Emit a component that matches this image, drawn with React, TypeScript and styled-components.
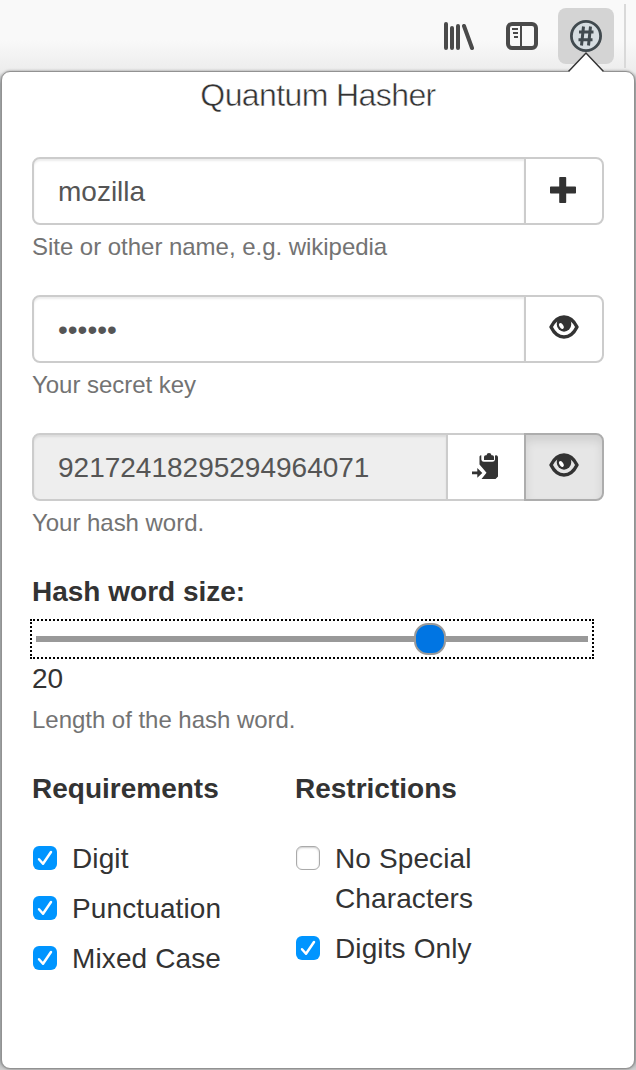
import React, { useState } from 'react';
import styled, { createGlobalStyle } from 'styled-components';

const Global = createGlobalStyle`
  * { box-sizing: border-box; }
  body { margin: 0; background: #b9bcbe; font-family: "Liberation Sans", Arial, sans-serif; font-size: 28px; line-height: 40px; color: #333; }
`;

const Window = styled.div`
  width: 636px;
  height: 1070px;
  display: flex;
  flex-direction: column;
  overflow: hidden;
  background: linear-gradient(#f9f9f9 0, #f9f9f9 40px, #ececec 72px, #b4b8ba 84px, #b4b8ba 1060px, #d0d0d0);
`;
const Toolbar = styled.div`
  height: 71px;
  flex: none;
  display: flex;
  justify-content: flex-end;
  padding-top: 8px;
`;
const ToolButton = styled.div<{ $active?: boolean }>`
  position: relative;
  width: 56px;
  height: 56px;
  margin-left: 8px;
  display: flex;
  align-items: center;
  justify-content: center;
  border-radius: 8px;
  background: ${(p) => (p.$active ? '#d4d4d4' : 'transparent')};
`;
const Separator = styled.div`
  width: 2px;
  height: 64px;
  margin: -4px 10px 0;
  background: #d9d9d9;
`;
const Notch = styled.svg`
  position: absolute;
  left: 9px;
  top: 43px;
  z-index: 1;
`;
const Panel = styled.main`
  width: 634px;
  height: 998px;
  margin-left: 1px;
  flex: none;
  padding: 3px 30px 0;
  background: #fff;
  border: 1px solid #929292;
  border-radius: 9px;
  box-shadow: 0 0 3px rgba(0, 0, 0, 0.4);
`;
const Title = styled.h1`
  margin: 0 0 42px;
  font-size: 32px;
  font-weight: 300;
  line-height: 40px;
  letter-spacing: -0.6px;
  text-align: center;
  -webkit-text-stroke: 0.5px #fff;
`;
const Group = styled.div`
  margin-bottom: 28px;
`;
const InputRow = styled.div`
  display: flex;
  width: 572px;
  height: 68px;
`;
const Field = styled.input`
  flex: 1;
  min-width: 0;
  height: 68px;
  padding: 1px 24px 0;
  border: 2px solid #ccc;
  border-radius: 8px 0 0 8px;
  outline: 0;
  background: ${(p) => (p.readOnly ? '#eee' : '#fff')};
  color: #555;
  font: 28px "Liberation Sans", Arial, sans-serif;
  box-shadow: inset 0 2px 2px rgba(0, 0, 0, 0.075);
`;
const AddOn = styled.button<{ $last?: boolean; $pressed?: boolean }>`
  width: 80px;
  margin-left: -2px;
  padding: 0 2px 2px 0;
  display: flex;
  align-items: center;
  justify-content: center;
  position: relative;
  color: #333;
  border: 2px solid ${(p) => (p.$pressed ? '#adadad' : '#ccc')};
  border-radius: ${(p) => (p.$last ? '0 8px 8px 0' : '0')};
  background: ${(p) => (p.$pressed ? '#e6e6e6' : '#fff')};
  box-shadow: ${(p) => (p.$pressed ? 'inset 0 6px 10px rgba(0,0,0,.1)' : 'none')};
`;
const Help = styled.p`
  margin: 2px 0 0;
  font-size: 24px;
  letter-spacing: -0.03px;
  color: #737373;
`;
const Heading = styled.h2`
  margin: 0;
  padding-top: 1px;
  font-size: 28px;
  line-height: 40px;
  font-weight: 700;
`;
const Slider = styled.div`
  width: 564px;
  height: 40px;
  margin: 7px 0 0 -2px;
  padding: 0 4px;
  display: flex;
  align-items: center;
  border: 2px dotted #000;
`;
const Track = styled.div`
  height: 6px;
  flex: 1;
  display: flex;
  align-items: center;
  padding-left: 378px;
  background: #999;
`;
const Thumb = styled.div`
  width: 32px;
  height: 32px;
  flex: none;
  border: 2px solid #999;
  border-radius: 14px;
  background: #0075e3;
`;
const SliderValue = styled.div`
  height: 39px;
`;
const Columns = styled.div`
  display: grid;
  grid-template-columns: 263px 210px;
`;
const Options = styled.section`
  display: flex;
  flex-direction: column;
  gap: 10px;
`;
const OptionsTitle = styled(Heading)`
  margin-bottom: 20px;
`;
const Option = styled.label`
  display: flex;
  align-items: flex-start;
  gap: 15px;
  padding-left: 1px;
  letter-spacing: 0.12px;
`;
const Box = styled.span<{ $on?: boolean }>`
  flex: none;
  width: 24px;
  height: 24px;
  margin-top: 7px;
  border-radius: 6px;
  background: ${(p) => (p.$on ? '#0095ff' : '#fff')};
  border: ${(p) => (p.$on ? '0' : '1px solid #aaa')};
  box-shadow: ${(p) => (p.$on ? 'none' : 'inset 0 1px 2px #ccc')};
`;

const Library = () => (
  <svg width="32" height="32" viewBox="0 0 32 32" fill="none" stroke="#4a4a4a" strokeWidth="4" strokeLinecap="round">
    <path d="M4 4v24M10 8v20M16 6v22M22 6l8 22" />
  </svg>
);
const Sidebar = () => (
  <svg width="32" height="32" viewBox="0 0 32 32" fill="none" stroke="#4a4a4a">
    <rect x="2" y="4" width="28" height="24" rx="4" strokeWidth="4" />
    <path d="M15 5v22M6 9h6M7 13h5M8 17h4" strokeWidth="2" />
  </svg>
);
const HashBadge = () => (
  <svg width="32" height="32" viewBox="0 0 32 32" fill="none" stroke="#414a4f">
    <circle cx="16" cy="16" r="14.6" fill="#d6dde1" strokeWidth="2.8" />
    <path d="M13.500 6.500l-2 19M20.500 6.500l-2 19M9 12h14.500M8.500 19.800h14" strokeWidth="3" />
  </svg>
);
const Plus = () => (
  <svg width="26" height="26" viewBox="0 0 26 26" fill="#333">
    <path d="M10 0h5.400q.8 0 .8.8v8.700h9q.8 0 .8.8v5.400q0 .8-.8.8h-9v8.700q0 .8-.8.8H10q-.8 0-.8-.8v-8.700H.8q-.8 0-.8-.8v-5.400q0-.8.8-.8h8.400V.8q0-.8.8-.8z" />
  </svg>
);
const EyeSvg = styled.svg`
  margin: -3px 0 0 1px;
`;
const Eye = () => (
  <EyeSvg width="30" height="24" viewBox="0 0 30 24">
    <path d="M2 12C5.200 5.600 9.600 2 15 2S24.800 5.600 28 12C24.800 18.400 20.400 22 15 22S5.200 18.400 2 12z" fill="none" stroke="#333" strokeWidth="3.400" strokeLinejoin="round" />
    <path d="M9 3.500Q15 .5 21 3.500Q22.200 6.500 22.200 9.500A7.200 7.200 0 0 1 7.800 9.500Q7.800 6.500 9 3.500z" fill="#333" />
    <ellipse cx="12.400" cy="11" rx="1.900" ry="3.200" transform="rotate(-32 12.400 11)" fill="#fff" />
  </EyeSvg>
);
const Paste = () => (
  <svg width="28" height="28" viewBox="0 0 28 28" fill="#333">
    <path d="M8.500 4.500Q9 3.200 10.300 3.200V7.500Q10.500 9.800 12.800 9.800H21.300Q23.800 9.800 24 7.500V3.400L25.500 3.200Q27 3.600 27 5.500V24.500L24.500 27H10.500L15.500 20.700L8.500 12.500z" />
    <path d="M13 8V5q0-1.700 1.700-1.700h.8Q15.800.9 18 .9T20.500 3.300h.8Q23 3.300 23 5v3z" />
    <path d="M1 19.600h5.300v-3.500l5 4.800-5 4.800v-3.500H1z" />
  </svg>
);
const Check = () => (
  <svg width="24" height="24" viewBox="0 0 24 24" fill="none" stroke="#fff" strokeWidth="2.500" strokeLinecap="round" strokeLinejoin="round" display="block">
    <path d="M6 13.200l4 4.600L18 6" />
  </svg>
);

const Choice = ({ on, children }: { on?: boolean; children: React.ReactNode }) => (
  <Option>
    <Box $on={on}>{on && <Check />}</Box>
    <span>{children}</span>
  </Option>
);

export default function App() {
  const [site, setSite] = useState('mozilla');
  const [secret, setSecret] = useState('••••••');
  return (
    <>
      <Global />
      <Window>
        <Toolbar>
          <ToolButton><Library /></ToolButton>
          <ToolButton><Sidebar /></ToolButton>
          <ToolButton $active>
            <HashBadge />
            <Notch width="38" height="22" viewBox="0 0 38 22">
              <path d="M1.500 20.500L19 2l17.500 18.500V22h-35z" fill="#fff" />
              <path d="M1.500 20.500L19 2l17.500 18.500" fill="none" stroke="#333" strokeWidth="1.500" />
            </Notch>
          </ToolButton>
          <Separator />
        </Toolbar>
        <Panel>
          <Title>Quantum Hasher</Title>
          <Group>
            <InputRow>
              <Field value={site} onChange={(e) => setSite(e.target.value)} />
              <AddOn $last><Plus /></AddOn>
            </InputRow>
            <Help>Site or other name, e.g. wikipedia</Help>
          </Group>
          <Group>
            <InputRow>
              <Field value={secret} onChange={(e) => setSecret(e.target.value)} />
              <AddOn $last><Eye /></AddOn>
            </InputRow>
            <Help>Your secret key</Help>
          </Group>
          <Group>
            <InputRow>
              <Field readOnly value="92172418295294964071" />
              <AddOn><Paste /></AddOn>
              <AddOn $last $pressed><Eye /></AddOn>
            </InputRow>
            <Help>Your hash word.</Help>
          </Group>
          <Group>
            <Heading>Hash word size:</Heading>
            <Slider><Track><Thumb /></Track></Slider>
            <SliderValue>20</SliderValue>
            <Help>Length of the hash word.</Help>
          </Group>
          <Columns>
            <Options>
              <OptionsTitle>Requirements</OptionsTitle>
              <Choice on>Digit</Choice>
              <Choice on>Punctuation</Choice>
              <Choice on>Mixed Case</Choice>
            </Options>
            <Options>
              <OptionsTitle>Restrictions</OptionsTitle>
              <Choice>No Special Characters</Choice>
              <Choice on>Digits Only</Choice>
            </Options>
          </Columns>
        </Panel>
      </Window>
    </>
  );
}
